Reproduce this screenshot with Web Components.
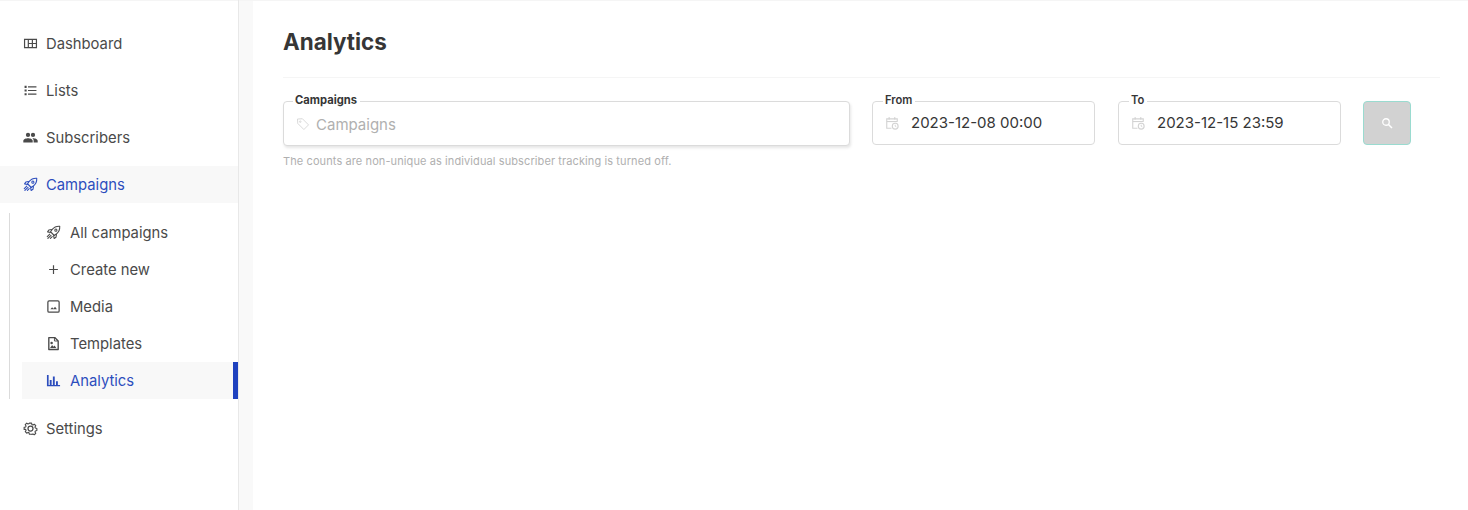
<!DOCTYPE html>
<html>
<head>
<meta charset="utf-8">
<style>
  html, body { margin: 0; padding: 0; height: 100%; background: #fff; }
  body { font-family: Inter, "Liberation Sans", sans-serif; overflow: hidden; }
</style>
</head>
<body>
<app-shell>
  <side-nav slot="side">
    <nav-item label="Dashboard" icon="dashboard"></nav-item>
    <nav-item label="Lists" icon="lists"></nav-item>
    <nav-item label="Subscribers" icon="people"></nav-item>
    <nav-item label="Campaigns" icon="rocket" active></nav-item>
    <sub-menu>
      <nav-item sub label="All campaigns" icon="rocket"></nav-item>
      <nav-item sub label="Create new" icon="plus"></nav-item>
      <nav-item sub label="Media" icon="image"></nav-item>
      <nav-item sub label="Templates" icon="file"></nav-item>
      <nav-item sub label="Analytics" icon="chart" active current></nav-item>
    </sub-menu>
    <nav-item label="Settings" icon="gear"></nav-item>
  </side-nav>
  <analytics-page>
    <filter-field style="width:567px" label="Campaigns" icon="tag" placeholder="Campaigns" shadow></filter-field>
    <filter-field style="width:223px;margin-left:22px" label="From" icon="calendar" value="2023-12-08 00:00"></filter-field>
    <filter-field style="width:223px;margin-left:23px" label="To" icon="calendar" value="2023-12-15 23:59"></filter-field>
    <search-button style="margin-left:22px"></search-button>
  </analytics-page>
</app-shell>

<script>
const ICONS = {
  dashboard: '<path d="M2.500 5.500h19v13h-19z" fill="none" stroke="currentColor" stroke-width="1.900"/><path d="M8.500 5.500v13M15 5.500v13M8.500 12h13" fill="none" stroke="currentColor" stroke-width="1.900"/>',
  lists: '<path d="M2.500 4.500h3.300v3.300H2.500zM2.500 10.300h3.300v3.300H2.500zM2.500 16.200h3.300v3.300H2.500z" fill="currentColor"/><path d="M8 6.100h13.500M8 12h13.500M8 17.900h13.500" stroke="currentColor" stroke-width="1.900" fill="none"/>',
  people: '<path d="M16 11.200a3.400 3.400 0 1 0 0-6.800 3.400 3.400 0 0 0 0 6.800zm-8 0a3.400 3.400 0 1 0 0-6.800 3.400 3.400 0 0 0 0 6.800zm0 2C5.300 13.200.5 14.500.5 17.200v2.600h15v-2.600c0-2.700-4.800-4-7.500-4zm8 0c-.3 0-.7 0-1.100.1 1.300.9 2.100 2.200 2.100 3.900v2.600h6.500v-2.600c0-2.700-4.800-4-7.500-4z" fill="currentColor"/>',
  rocket: '<g fill="none" stroke="currentColor" stroke-width="1.700" stroke-linejoin="round" stroke-linecap="round"><path d="M22 2c-5.200-.3-9.200 1.500-12 5l-2.800 3.800 6 6 3.800-2.800c3.500-2.800 5.300-6.800 5-12z"/><circle cx="15.800" cy="8.200" r="1.700"/><path d="M8.800 7.200 4.500 8 2.500 11l4.700.9M16.800 15.200l-.8 4.300-3 2-.9-4.700M6 14.500 2 18.500M8 16.500l-5 5M10 18.500l-3 3"/></g>',
  plus: '<path d="M12 5v14M5 12h14" fill="none" stroke="currentColor" stroke-width="1.900"/>',
  image: '<rect x="3" y="3" width="18" height="18" rx="2" fill="none" stroke="currentColor" stroke-width="2"/><path d="M7 16.500l2.800-3.300 2 2.300 2.700-3.300 3 4.300z" fill="currentColor"/>',
  file: '<path d="M4.500 2.500h9.500l5.500 5.500v13.500h-15z" fill="none" stroke="currentColor" stroke-width="2.200" stroke-linejoin="round"/><path d="M13.500 3v5h5.500" fill="none" stroke="currentColor" stroke-width="1.500"/><path d="M6.500 19l3.300-4.500 2.200 2.700 1.600-2 2.900 3.800z" fill="currentColor"/><circle cx="9" cy="11" r="2" fill="currentColor"/>',
  chart: '<path d="M1.500 3h2.700v16h18.300v2.300h-21zM6 11h3v8H6zM11 5.500h3V19h-3zM16 13h3v6h-3z" fill="currentColor"/>',
  gear: '<g fill="none" stroke="currentColor" stroke-linejoin="round"><path stroke-width="2.100" d="M10 2h4l.7 2.800 1.900.8 2.500-1.500 2.800 2.800-1.500 2.500.8 1.900 2.800.7v4l-2.800.7-.8 1.900 1.500 2.500-2.800 2.800-2.500-1.500-1.900.8L14 23h-4l-.7-2.800-1.900-.8-2.500 1.500-2.800-2.800 1.500-2.500-.8-1.900L0 14v-4l2.800-.7.800-1.900L2.100 4.900l2.800-2.800 2.500 1.500 1.900-.8z" transform="translate(1.800 1.700) scale(.85)"/><circle cx="12" cy="12" r="4" stroke-width="2"/></g>',
  tag: '<g fill="none" stroke="currentColor" stroke-width="1.500" stroke-linejoin="round"><path d="M2.500 3.500l8.500-.5 10.500 10.500-8 8-10.500-10.500z"/><circle cx="7.300" cy="8" r="1.300"/></g>',
  calendar: '<g fill="none" stroke="currentColor" stroke-width="1.900"><path d="M21 10V5H3v16h8"/><path d="M3 9.500h18"/><circle cx="17.500" cy="17.500" r="5"/><path d="M17.500 15v2.500l2 1.300" stroke-width="1.500"/></g><path d="M6 2h2.300v4H6zM15.500 2h2.300v4h-2.300z" fill="currentColor"/>',
  search: '<circle cx="10" cy="10" r="6.500" fill="none" stroke="currentColor" stroke-width="2.600"/><path d="M15 15l7 7" stroke="currentColor" stroke-width="3" fill="none"/>'
};

function svg(name, size) {
  return `<svg viewBox="0 0 24 24" width="${size}" height="${size}">${ICONS[name]}</svg>`;
}

class AppShell extends HTMLElement {
  constructor() {
    super();
    this.attachShadow({ mode: 'open' });
    this.shadowRoot.innerHTML = `
      <style>
        :host { display: flex; height: 510px; box-shadow: inset 0 1px 0 #f5f5f5; }
        .side { width: 238px; flex: none; border-right: 1px solid #e8e8e8; padding-top: 1px; }
        .gutter { width: 14px; flex: none; background: #f9f9f9; margin-top: 1px; }
        .main { flex: 1; min-width: 0; margin-top: 1px; }
      </style>
      <div class="side"><slot name="side"></slot></div>
      <div class="gutter"></div>
      <div class="main"><slot></slot></div>
    `;
  }
}

class SideNav extends HTMLElement {
  constructor() {
    super();
    this.attachShadow({ mode: 'open' });
    this.shadowRoot.innerHTML = `
      <style>
        :host { display: flex; flex-direction: column; gap: 10px; padding-top: 24px; }
      </style>
      <slot></slot>
    `;
  }
}

class SubMenu extends HTMLElement {
  constructor() {
    super();
    this.attachShadow({ mode: 'open' });
    this.shadowRoot.innerHTML = `
      <style>
        :host { display: block; margin: 0 0 1px 9px; border-left: 1px solid #dbdbdb; padding: 1px 0 0 12px; height: 186px; box-sizing: border-box; }
      </style>
      <slot></slot>
    `;
  }
}

class NavItem extends HTMLElement {
  constructor() {
    super();
    this.attachShadow({ mode: 'open' });
  }
  connectedCallback() {
    const label = this.getAttribute('label');
    const icon = this.getAttribute('icon');
    this.shadowRoot.innerHTML = `
      <style>
        :host { display: flex; align-items: center; height: 37px; padding-left: 23px; gap: 8px; font-size: 14.8px; color: #4a4a4a; box-sizing: border-box; position: relative; }
        :host([sub]) { padding-left: 24px; gap: 9px; }
        :host([active]) { color: #2c4dbd; }
        :host(:not([sub])[active]), :host([current]) { background: #f8f8f8; }
        :host([current])::after { content: ""; position: absolute; right: 0; top: 0; bottom: 0; width: 5px; background: #1f42bf; }
        svg { flex: none; display: block; }
      </style>
      ${svg(icon, 15)}<span>${label}</span>
    `;
  }
}

class FilterField extends HTMLElement {
  constructor() {
    super();
    this.attachShadow({ mode: 'open' });
  }
  connectedCallback() {
    const label = this.getAttribute('label');
    const value = this.getAttribute('value');
    const placeholder = this.getAttribute('placeholder');
    const icon = this.getAttribute('icon');
    this.shadowRoot.innerHTML = `
      <style>
        :host { display: block; flex: none; position: relative; }
        .box { height: 44px; box-sizing: border-box; border: 1px solid #dbdbdb; border-radius: 4px; display: flex; align-items: center; padding-left: 12px; background: #fff; }
        :host([shadow]) .box { box-shadow: 1px 2px 3px rgba(0,0,0,.1); height: 45px; }
        .label { position: absolute; left: 11px; top: -7px; background: #fff; padding: 0 3px 0 2px; font-size: 11.2px; font-weight: 600; line-height: 13px; color: #363636; }
        :host([shadow]) .label { left: 10px; font-weight: 700; }
        .icon { color: #d3d3d3; display: flex; width: 14px; }
        .val { font-size: 15px; color: #363636; margin-left: 12px; padding-bottom: 1px; }
        .ph { font-size: 15px; color: #b0b0b0; margin-left: 6px; padding-top: 1px; }
      </style>
      <div class="label">${label}</div>
      <div class="box">
        <span class="icon">${svg(icon, 14)}</span>
        ${value ? `<span class="val">${value}</span>` : `<span class="ph">${placeholder}</span>`}
      </div>
    `;
  }
}

class SearchButton extends HTMLElement {
  constructor() {
    super();
    this.attachShadow({ mode: 'open' });
    this.shadowRoot.innerHTML = `
      <style>
        :host { display: flex; flex: none; width: 48px; height: 44px; box-sizing: border-box; background: #d2d2d2; border: 1px solid #9adbd0; border-radius: 4px; align-items: center; justify-content: center; color: #fff; }
        svg { display: block; }
      </style>
      ${svg('search', 12)}
    `;
  }
}

class AnalyticsPage extends HTMLElement {
  constructor() {
    super();
    this.attachShadow({ mode: 'open' });
    this.shadowRoot.innerHTML = `
      <style>
        :host { display: block; padding: 0 28px 0 30px; color: #363636; }
        h1 { margin: 0; padding-top: 26px; height: 50px; font-size: 22.4px; line-height: 30px; font-weight: 700; color: #363636; border-bottom: 1px solid #f5f5f5; }
        .row { display: flex; align-items: flex-start; margin-top: 23px; }
        p { margin: 8px 0 0; font-size: 11px; line-height: 14px; color: #b0b0b0; letter-spacing: .1px; }
      </style>
      <h1>Analytics</h1>
      <div class="row"><slot></slot></div>
      <p>The counts are non-unique as individual subscriber tracking is turned off.</p>
    `;
  }
}

customElements.define('app-shell', AppShell);
customElements.define('side-nav', SideNav);
customElements.define('sub-menu', SubMenu);
customElements.define('nav-item', NavItem);
customElements.define('filter-field', FilterField);
customElements.define('search-button', SearchButton);
customElements.define('analytics-page', AnalyticsPage);
</script>
</body>
</html>
